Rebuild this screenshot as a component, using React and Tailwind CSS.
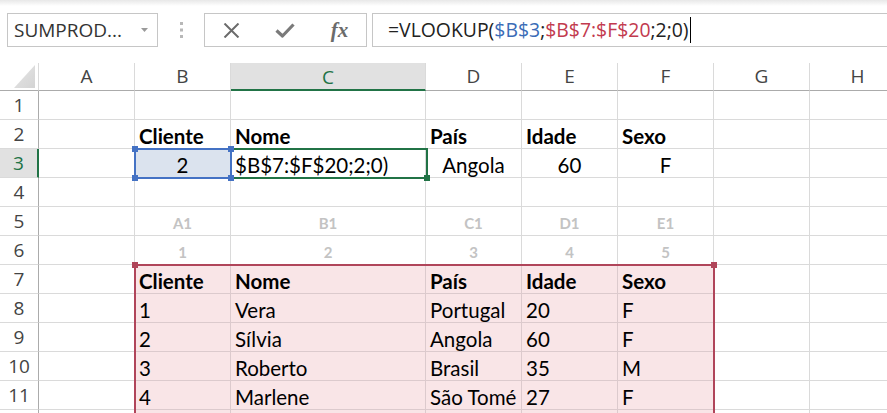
import React from 'react';

const COLS = [
  { id: 'A', w: 'w-[96px]' },
  { id: 'B', w: 'w-[96px]' },
  { id: 'C', w: 'w-[195px]' },
  { id: 'D', w: 'w-[96px]' },
  { id: 'E', w: 'w-[96px]' },
  { id: 'F', w: 'w-[96px]' },
  { id: 'G', w: 'w-[96px]' },
  { id: 'H', w: 'w-[96px]' },
];

const head = ['Cliente', 'Nome', 'País', 'Idade', 'Sexo'];

// row 12 only shows its top gridline in the shot, so no label
const rows = [
  { n: 1, kind: 'empty' },
  { n: 2, kind: 'bold', vals: head },
  { n: 3, kind: 'lookup', vals: ['2', '$B$7:$F$20;2;0)', 'Angola', '60', 'F'] },
  { n: 4, kind: 'empty' },
  { n: 5, kind: 'ref', vals: ['A1', 'B1', 'C1', 'D1', 'E1'] },
  { n: 6, kind: 'ref', vals: ['1', '2', '3', '4', '5'] },
  { n: 7, kind: 'tblhead', vals: head },
  { n: 8, kind: 'tbl', vals: ['1', 'Vera', 'Portugal', '20', 'F'] },
  { n: 9, kind: 'tbl', vals: ['2', 'Sílvia', 'Angola', '60', 'F'] },
  { n: 10, kind: 'tbl', vals: ['3', 'Roberto', 'Brasil', '35', 'M'] },
  { n: 11, kind: 'tbl', vals: ['4', 'Marlene', 'São Tomé', '27', 'F'] },
  { n: 12, kind: 'tbl', vals: ['', '', '', '', ''], hideNum: true },
];

function cellClass(kind, col) {
  const inRange = col >= 1 && col <= 5;
  if (!inRange || kind === 'empty') return 'border-[#dadada]';
  if (kind === 'bold') return 'border-[#dadada] font-bold text-[20.5px] text-black';
  if (kind === 'ref') return 'border-[#dadada] justify-center font-bold text-[15px] text-[#c3c3c3]';
  if (kind === 'lookup') {
    if (col === 1) return 'border-[#dadada] justify-center bg-[#dbe3ee] text-[20.5px] text-black';
    if (col === 2) return 'border-[#dadada] text-[20.5px] text-black';
    return 'border-[#dadada] justify-center text-[20.5px] text-black';
  }
  if (kind === 'tblhead') return 'border-[#dccacd] bg-[#f9e5e7] font-bold text-[20.5px] text-black';
  return 'border-[#dccacd] bg-[#f9e5e7] text-[20.5px] text-black';
}

function Handle({ pos, color }) {
  return <span className={`absolute h-[6px] w-[6px] ${pos} ${color}`} />;
}

function Toolbar() {
  return (
    <div>
      <div className="h-[6px] bg-gradient-to-b from-[#e8e8e8] to-white" />
      <div className="mt-[7px] flex h-[34px] font-['Open_Sans','Noto_Sans',sans-serif]">
        <div className="ml-[7px] flex w-[151px] shrink-0 items-center justify-between border border-[#c6c6c6] pl-[6px] pr-[9px] text-[19px] text-[#333]">
          <span>SUMPROD...</span>
          <svg width="7" height="4" viewBox="0 0 7 4">
            <path d="M0 0h7L3.5 4z" fill="#9a9a9a" />
          </svg>
        </div>
        <div className="flex w-[46px] shrink-0 items-center justify-center">
          <svg width="3" height="16" viewBox="0 0 3 16">
            <rect x="0" y="0" width="3" height="3" fill="#b8b8b8" />
            <rect x="0" y="6.5" width="3" height="3" fill="#b8b8b8" />
            <rect x="0" y="13" width="3" height="3" fill="#b8b8b8" />
          </svg>
        </div>
        <div className="flex w-[163px] shrink-0 items-center justify-around border border-[#c6c6c6]">
          <svg width="17" height="15" viewBox="0 0 17 15">
            <path d="M1.5 0.5L15.5 14.5M15.5 0.5L1.5 14.5" stroke="#6b6b6b" strokeWidth="2" fill="none" />
          </svg>
          <svg width="20" height="15" viewBox="0 0 20 15">
            <path d="M1.5 7.5L7.5 13L18.5 1.5" stroke="#7a7a7a" strokeWidth="3.2" fill="none" strokeLinejoin="round" />
          </svg>
          <span className="font-['Liberation_Serif',serif] text-[21px] font-semibold italic leading-none text-[#6b6b6b]">fx</span>
        </div>
        <div className="-mr-[4px] ml-[5px] flex flex-1 items-center border border-[#c6c6c6] pl-[15px] text-[19.4px] text-[#222]">
          <span>=VLOOKUP(</span>
          <span className="text-[#3b6cb7]">$B$3</span>
          <span>;</span>
          <span className="text-[#c23a4e]">$B$7:$F$20</span>
          <span>;2;0)</span>
          <span className="ml-[1px] inline-block h-[26px] w-px bg-black" />
        </div>
      </div>
    </div>
  );
}

function Sheet() {
  return (
    <div className="relative mt-[16px]">
      <div className="flex h-[28px] font-['Open_Sans','Noto_Sans',sans-serif] text-[19px]">
        <div className="flex w-[39px] shrink-0 items-end justify-end border-r border-b border-r-[#dadada] border-b-[#ababab] pr-[3px] pb-[2px]">
          <svg width="21" height="23" viewBox="0 0 21 23">
            <defs>
              <linearGradient id="corner" x1="0" y1="0" x2="1" y2="1">
                <stop offset="0" stopColor="#e6e6e6" />
                <stop offset="1" stopColor="#d4d4d4" />
              </linearGradient>
            </defs>
            <path d="M21 0V23H0z" fill="url(#corner)" />
          </svg>
        </div>
        {COLS.map((c) => (
          <div
            key={c.id}
            className={`${c.w} flex shrink-0 items-center justify-center border-r border-r-[#dadada] ${
              c.id === 'C'
                ? 'border-b-2 border-b-[#217346] bg-[#e1e1e1] pt-[2px] text-[#217346]'
                : 'border-b border-b-[#ababab] text-[#444]'
            }`}
          >
            {c.id}
          </div>
        ))}
      </div>

      {rows.map((r) => (
        <div key={r.n} className="flex h-[29px]">
          <div
            className={`flex w-[39px] shrink-0 items-center justify-center border-b border-b-[#dadada] font-['Open_Sans','Noto_Sans',sans-serif] text-[19px] ${
              r.n === 3
                ? 'border-r-2 border-r-[#217346] bg-[#e1e1e1] text-[#217346]'
                : 'border-r border-r-[#ababab] text-[#444]'
            }`}
          >
            {r.hideNum ? '' : r.n}
          </div>
          {COLS.map((c, i) => (
            <div
              key={c.id}
              className={`${c.w} flex h-full shrink-0 items-end whitespace-nowrap border-r border-b px-[4px] font-['Lato',sans-serif] leading-[24px] ${cellClass(
                r.kind,
                i
              )}`}
            >
              {r.vals && i >= 1 && i <= 5 ? r.vals[i - 1] : ''}
            </div>
          ))}
        </div>
      ))}

      {/* active cell C3 */}
      <div className="pointer-events-none absolute left-[230px] top-[85px] h-[31px] w-[198px] border-2 border-[#217346]">
        <Handle pos="-right-[4px] -bottom-[4px]" color="bg-[#217346]" />
      </div>
      {/* reference $B$3 */}
      <div className="pointer-events-none absolute left-[134px] top-[85px] h-[31px] w-[98px] border-2 border-[#4472c4]">
        <Handle pos="-left-[4px] -top-[4px]" color="bg-[#4472c4]" />
        <Handle pos="-right-[4px] -top-[4px]" color="bg-[#4472c4]" />
        <Handle pos="-left-[4px] -bottom-[4px]" color="bg-[#4472c4]" />
        <Handle pos="-right-[4px] -bottom-[4px]" color="bg-[#4472c4]" />
      </div>
      {/* reference $B$7:$F$20 */}
      <div className="pointer-events-none absolute left-[134px] top-[201px] h-[200px] w-[581px] border-2 border-b-0 border-[#b0455a]">
        <Handle pos="-left-[4px] -top-[4px]" color="bg-[#b0455a]" />
        <Handle pos="-right-[4px] -top-[4px]" color="bg-[#b0455a]" />
      </div>
    </div>
  );
}

export default function App() {
  return (
    <div className="h-[413px] w-[887px] overflow-hidden bg-white">
      <Toolbar />
      <Sheet />
    </div>
  );
}
